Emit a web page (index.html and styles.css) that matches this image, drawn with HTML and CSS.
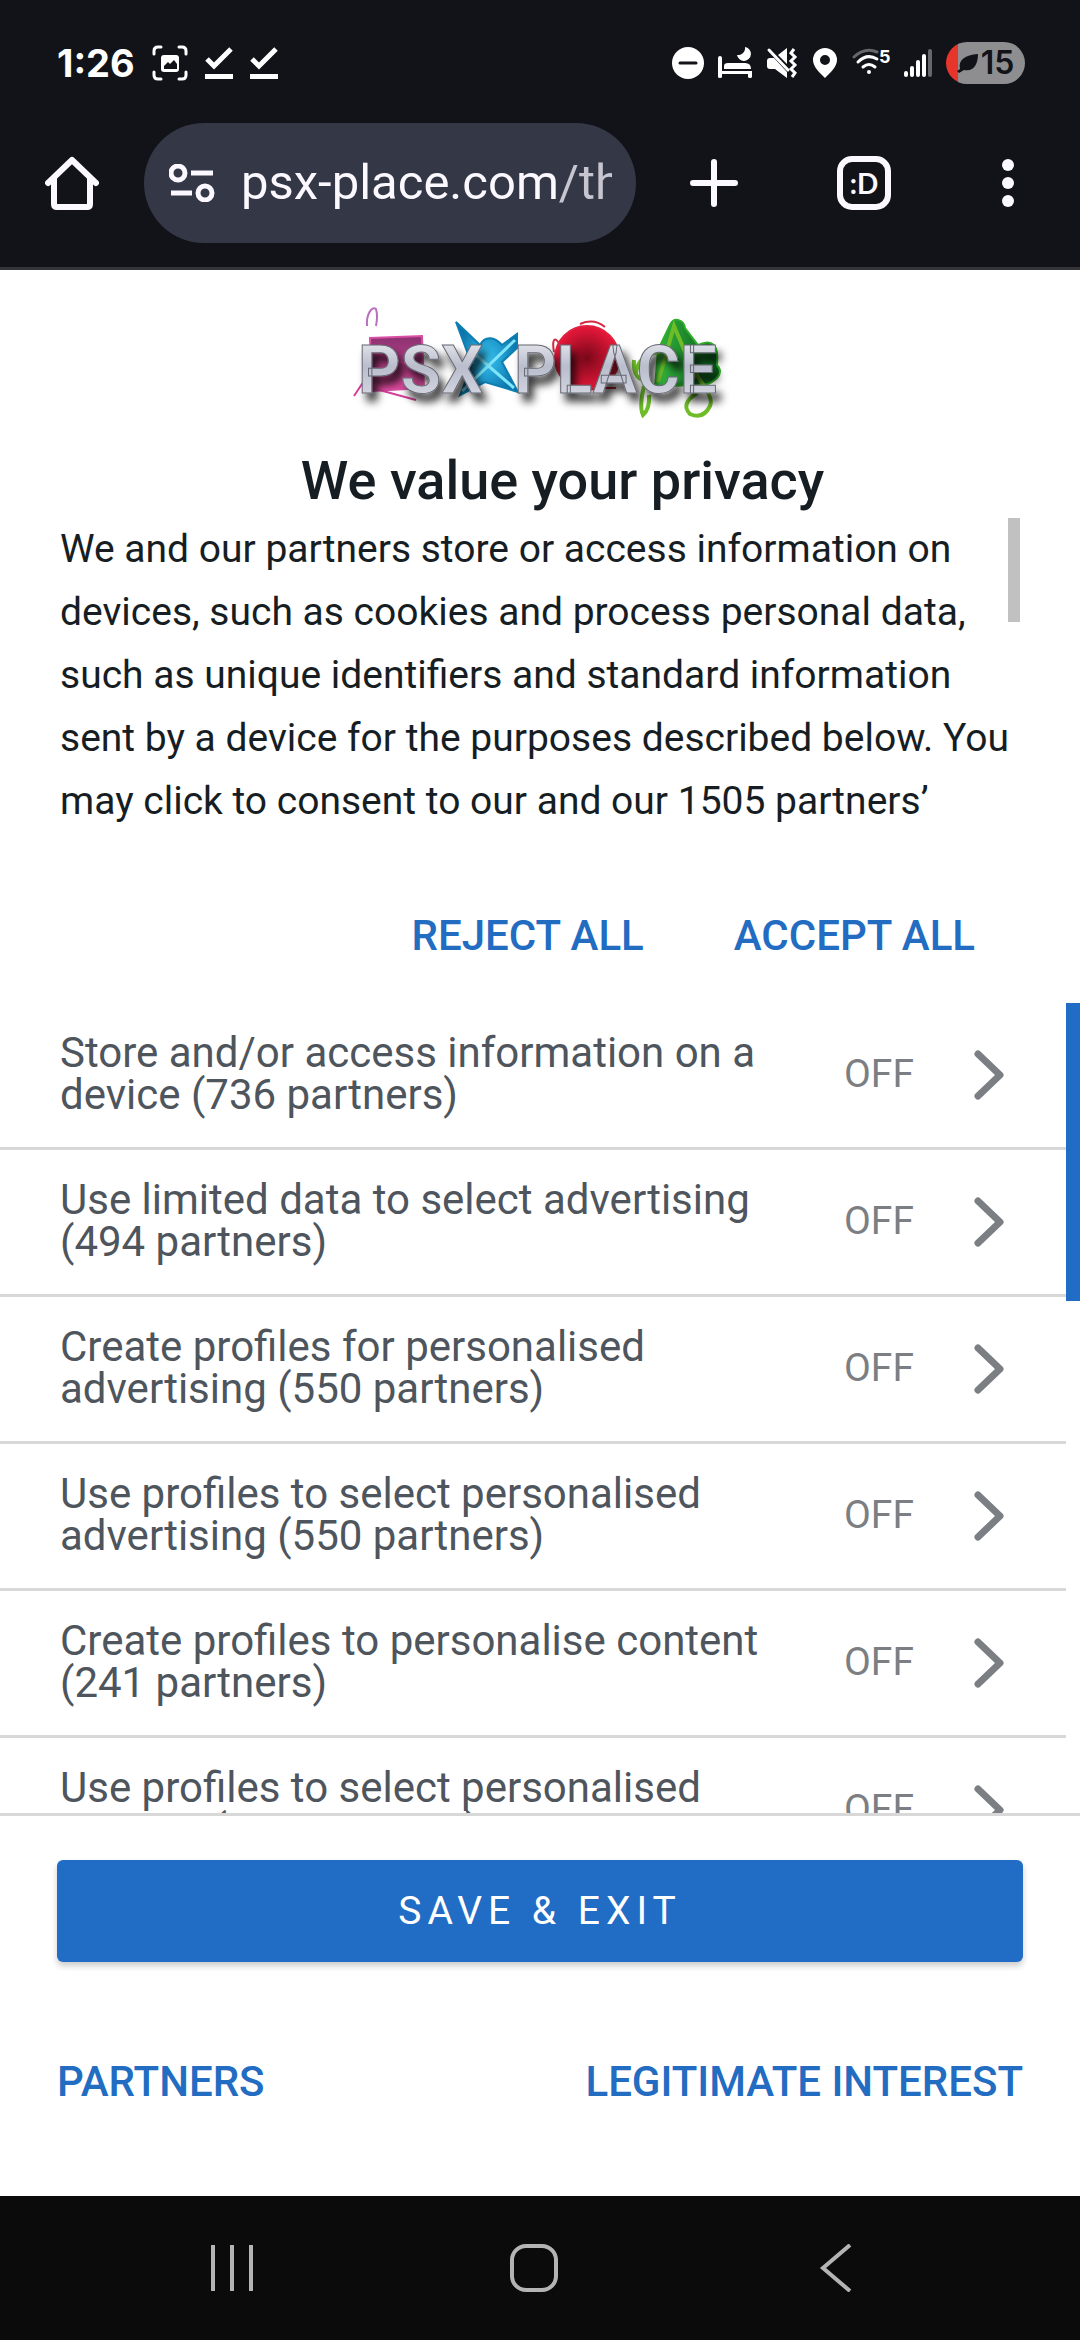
FILE: index.html
```html
<!DOCTYPE html>
<html lang="en">
<head>
<meta charset="utf-8">
<meta name="viewport" content="width=device-width, initial-scale=1">
<title>We value your privacy</title>
<link rel="stylesheet" href="styles.css">
</head>
<body>
<div class="screen">
  <header class="status">
    <div class="status-left">
      <time class="clock">1:26</time>
      <svg width="36" height="36" viewBox="0 0 36 36" fill="none" stroke="#fff" stroke-width="3" stroke-linecap="round"><path d="M2 9V6Q2 2 6 2H9M27 2H30Q34 2 34 6V9M34 27V30Q34 34 30 34H27M9 34H6Q2 34 2 30V27"/><rect x="9" y="10" width="18" height="17" rx="3" fill="#fff" stroke="none"/><path d="M12 24V21L16 17L18 19L22 15L25 19V24Z" fill="#121318" stroke="none"/></svg>
      <svg class="check" width="28" height="34" viewBox="0 0 28 34"><path d="M2 13L9 20L26 3" fill="none" stroke="#fff" stroke-width="5"/><path d="M0 28H28V33H0Z" fill="#fff"/></svg>
      <svg class="check" width="28" height="34" viewBox="0 0 28 34"><path d="M2 13L9 20L26 3" fill="none" stroke="#fff" stroke-width="5"/><path d="M0 28H28V33H0Z" fill="#fff"/></svg>
    </div>
    <div class="status-right">
      <svg width="32" height="32" viewBox="0 0 32 32"><circle cx="16" cy="16" r="16" fill="#fff"/><path d="M8 16H24" stroke="#121318" stroke-width="3" stroke-linecap="round"/></svg>
      <svg width="34" height="32" viewBox="0 0 34 32" fill="#fff"><path d="M0 11Q0 9 2 9T4 11V24H34V30Q34 31 32 31T30 30V27H4V30Q4 31 2 31T0 30Z"/><path d="M6 22V19Q6 16 10 16H27Q33 16 33 22Z"/><path d="M27 0A7 7 0 1 1 19 8A7 7 0 0 0 27 0Z"/></svg>
      <svg width="32" height="32" viewBox="0 0 32 32" fill="#fff"><path d="M1 14Q1 11 4 11H8L21 25V31L9 22H4Q1 22 1 19Z"/><path d="M12 8L21 1V17Z"/><path d="M3 3L22 23" stroke="#fff" stroke-width="3" stroke-linecap="round"/><path d="M28 2L25 6L29 10L25 14L29 18L25 22L29 26L26 30" fill="none" stroke="#fff" stroke-width="3"/></svg>
      <svg width="26" height="32" viewBox="0 0 26 32"><path fill="#fff" fill-rule="evenodd" d="M13 1A12 12 0 0 0 1 13C1 20 8 26 13 31C18 26 25 20 25 13A12 12 0 0 0 13 1ZM13 8A5 5 0 1 1 13 18A5 5 0 0 1 13 8Z"/></svg>
      <svg width="38" height="32" viewBox="0 0 38 32" fill="none" stroke="#fff" stroke-width="3" stroke-linecap="round"><path d="M2 10Q13 0 25 5" stroke="#66676b"/><path d="M6 15Q15 6 25 12M11 20Q17 15 23 20"/><circle cx="17" cy="25" r="2" fill="#fff" stroke="none"/><text x="27" y="16" class="wifi-num">5</text></svg>
      <svg width="28" height="32" viewBox="0 0 28 32" stroke="#fff" stroke-width="4" stroke-linecap="round"><path d="M2 26V28M8 21V28M14 15V28M20 9V28"/><path d="M26 4V28" stroke="#66676b"/></svg>
      <span class="battery"><svg width="22" height="22" viewBox="0 0 22 22"><path fill="#121318" d="M3 17C1 8 8 3 21 2C21 12 17 20 7 18L2 21L0 19L12 11Z"/></svg>15</span>
    </div>
  </header>
  <nav class="toolbar" aria-label="Browser">
    <button class="tool" aria-label="Home"><svg width="54" height="54" viewBox="0 0 54 54" fill="none" stroke="#fcf8ff" stroke-width="6" stroke-linejoin="round" stroke-linecap="round"><path d="M3 27L27 4L51 27M9 22V48Q9 51 12 51H42Q45 51 45 48V22"/></svg></button>
    <div class="omnibox">
      <svg width="46" height="38" viewBox="0 0 46 38" fill="none" stroke="#fcf8ff" stroke-width="5"><circle cx="9" cy="9" r="7"/><path d="M22 9H44M2 29H23"/><circle cx="36" cy="29" r="7"/></svg>
      <span class="url">psx-place.com<span class="path">/th</span></span>
    </div>
    <button class="tool" aria-label="New tab"><svg width="48" height="48" viewBox="0 0 48 48" stroke="#fcf8ff" stroke-width="6" stroke-linecap="round"><path d="M24 3V45M3 24H45"/></svg></button>
    <button class="tool" aria-label="Tabs"><span class="tabs">:D</span></button>
    <button class="tool" aria-label="Menu"><svg width="12" height="48" viewBox="0 0 12 48" fill="#fcf8ff"><circle cx="6" cy="6" r="6"/><circle cx="6" cy="24" r="6"/><circle cx="6" cy="42" r="6"/></svg></button>
  </nav>
  <main class="dialog">
    <svg class="logo" width="400" height="150" viewBox="0 0 400 150" role="img" aria-label="PSX-Place">
      <defs>
        <linearGradient id="metal" x1="0" y1="0" x2="0" y2="1"><stop offset="0" stop-color="#f4f4f8"/><stop offset=".45" stop-color="#b9bdcc"/><stop offset="1" stop-color="#dfe1ea"/></linearGradient>
        <radialGradient id="red"><stop offset="0" stop-color="#7a0719"/><stop offset="1" stop-color="#e8183a"/></radialGradient>
        <linearGradient id="pink" x1="0" y1="0" x2="0" y2="1"><stop offset="0" stop-color="#8b3270"/><stop offset="1" stop-color="#e04a9e"/></linearGradient>
        <radialGradient id="blue"><stop offset="0" stop-color="#36c5f4"/><stop offset="1" stop-color="#0d76ac"/></radialGradient>
        <linearGradient id="green" x1="0" y1="0" x2="1" y2="0"><stop offset="0" stop-color="#35b83f"/><stop offset="1" stop-color="#06541a"/></linearGradient>
        <filter id="shade" x="-10%" y="-20%" width="120%" height="150%"><feDropShadow dx="5" dy="8" stdDeviation="4" flood-color="#000" flood-opacity=".8"/></filter>
      </defs>
      <g fill="none" stroke-width="2">
        <path d="M27 36C26 24 32 16 36 19Q38 26 36 36" stroke="#b76fc0"/>
        <path d="M30 48L82 46L84 98L32 101Z" fill="url(#pink)" stroke="#d94fa4"/><path d="M14 106L22 94L32 98L76 110M32 62L84 80" stroke="#d6409b"/>
        <path d="M116 32L140 55C145 45 155 47 162 55L177 44L177 58L162 72L178 102L145 92L120 105L132 75Z" fill="url(#blue)" stroke="#0d7eb2"/><path d="M130 60L174 98M122 101L175 50" stroke="#7ee5fa" stroke-width="3"/>
        <circle cx="247" cy="68" r="32" fill="url(#red)" stroke="#df2240"/><path d="M214 62C210 40 222 44 232 98L276 98M240 34Q254 28 265 37" stroke="#d22b43"/>
        <path d="M315 97L318 60L330 35C334 26 344 30 345 38L358 55Q380 45 377 75Q386 85 368 94Z" fill="url(#green)" stroke="#2fae28"/>
        <path d="M304 96Q299 117 303 125Q310 119 309 105M353 76C357 90 375 106 370 116Q363 130 350 124Q340 114 357 103M318 92L334 36L356 88M296 83Q298 65 319 62M294 70Q292 92 312 92" stroke="#6ebd28" stroke-width="4"/>
      </g>
      <g class="wordmark" fill="url(#metal)" stroke="#686a74" filter="url(#shade)"><text x="18" y="103">PSX</text><text x="174" y="103">PLACE</text></g>
    </svg>
    <h1 class="title">We value your privacy</h1>
    <section class="notice">
      <p class="notice-text">We and our partners store or access information on devices, such as cookies and process personal data, such as unique identifiers and standard information sent by a device for the purposes described below. You may click to consent to our and our 1505 partners’</p>
      <span class="notice-thumb"></span>
    </section>
    <div class="choices"><button class="link">REJECT ALL</button><button class="link">ACCEPT ALL</button></div>
    <section class="purposes">
      <ul class="list">
        <li><button class="row"><span class="name">Store and/or access information on a device (736 partners)</span><span class="state">OFF</span><svg class="chev" viewBox="0 0 30 50"><path d="M4 4L26 25L4 46"/></svg></button></li>
        <li><button class="row"><span class="name">Use limited data to select advertising (494 partners)</span><span class="state">OFF</span><svg class="chev" viewBox="0 0 30 50"><path d="M4 4L26 25L4 46"/></svg></button></li>
        <li><button class="row"><span class="name">Create profiles for personalised advertising (550 partners)</span><span class="state">OFF</span><svg class="chev" viewBox="0 0 30 50"><path d="M4 4L26 25L4 46"/></svg></button></li>
        <li><button class="row"><span class="name">Use profiles to select personalised advertising (550 partners)</span><span class="state">OFF</span><svg class="chev" viewBox="0 0 30 50"><path d="M4 4L26 25L4 46"/></svg></button></li>
        <li><button class="row"><span class="name">Create profiles to personalise content (241 partners)</span><span class="state">OFF</span><svg class="chev" viewBox="0 0 30 50"><path d="M4 4L26 25L4 46"/></svg></button></li>
        <li><button class="row"><span class="name">Use profiles to select personalised content (219 partners)</span><span class="state">OFF</span><svg class="chev" viewBox="0 0 30 50"><path d="M4 4L26 25L4 46"/></svg></button></li>
      </ul>
      <span class="list-thumb"></span>
    </section>
    <footer class="actions">
      <button class="save">SAVE &amp; EXIT</button>
      <div class="more"><button class="link">PARTNERS</button><button class="link">LEGITIMATE INTEREST</button></div>
    </footer>
  </main>
  <nav class="system" aria-label="System">
    <button class="tool" aria-label="Recent apps"><svg width="48" height="48" viewBox="0 0 48 48" stroke="#b4b4b4" stroke-width="4"><path d="M5 1V47M24 1V47M43 1V47"/></svg></button>
    <button class="tool" aria-label="Home screen"><svg width="48" height="48" viewBox="0 0 48 48" fill="none" stroke="#b4b4b4" stroke-width="4"><rect x="2" y="2" width="44" height="44" rx="14"/></svg></button>
    <button class="tool" aria-label="Back"><svg width="48" height="48" viewBox="0 0 48 48" fill="none" stroke="#b4b4b4" stroke-width="4"><path d="M38 1L11 24L38 47"/></svg></button>
  </nav>
</div>
</body>
</html>
```
FILE: styles.css
```css
* { box-sizing: border-box; }
body { margin: 0; font-family: Roboto, "Liberation Sans", sans-serif; background: #fff; color: #171e23; }
button { margin: 0; padding: 0; border: 0; background: none; color: inherit; font: inherit; cursor: pointer; }
svg { display: block; flex: none; }
.screen { display: flex; flex-direction: column; height: 100vh; }

.status { display: flex; justify-content: space-between; align-items: center; height: 104px; padding: 22px 55px 0 57px; background: #121318; color: #fff; }
.status-left, .status-right { display: flex; align-items: center; }
.status-left { gap: 17px; }
.status-right { gap: 14px; }
.clock { font: 700 38px/42px Inter, sans-serif; }
.wifi-num { font: 700 18px Inter, sans-serif; fill: #fff; stroke: none; }
.battery { display: flex; align-items: center; justify-content: center; gap: 2px; width: 79px; height: 42px; border-radius: 21px; background: linear-gradient(90deg, #e8352c 12px, #8e8e91 12px); color: #121318; font: 600 32px/42px Inter, sans-serif; }

.toolbar { display: grid; grid-template-columns: 144px minmax(0, 1fr) 156px 144px 144px; align-items: center; height: 166px; padding-bottom: 5px; border-bottom: 3px solid #333338; background: #121318; color: #fcf8ff; }
.tool { display: grid; place-items: center; height: 100%; }
.omnibox { display: flex; align-items: center; gap: 26px; height: 120px; padding: 0 24px 0 25px; border-radius: 60px; background: #343746; }
.url { flex: 1; min-width: 0; overflow: hidden; white-space: nowrap; font: 400 49px/72px Roboto, sans-serif; }
.path { color: #c6c5d0; }
.tabs { display: grid; place-items: center; width: 54px; height: 54px; border: 6px solid #fcf8ff; border-radius: 15px; font: 700 28px/30px Lato, sans-serif; }

.dialog { display: flex; flex-direction: column; flex: 1; min-height: 0; }
.logo { align-self: center; margin-top: 20px; overflow: visible; }
.title { margin: 0 0 0 45px; padding: 6px 0 2px; text-align: center; font-size: 54px; line-height: 70px; font-weight: 500; }
.notice { position: relative; height: 315px; padding: 0 60px; overflow: hidden; }
.notice-text { margin: 0; font-size: 39px; line-height: 63px; }
.notice-thumb { position: absolute; top: 0; right: 60px; width: 12px; height: 104px; background: #c1c1c1; }
.choices { display: flex; justify-content: flex-end; gap: 90px; padding: 78px 105px 42px; }
.link { color: #226cc2; font-size: 42px; line-height: 50px; font-weight: 500; }
.purposes { display: flex; flex: 1; min-height: 0; overflow: hidden; }
.list { flex: 1; min-width: 0; margin: 0; padding: 0; list-style: none; }
.row { display: flex; align-items: center; width: 100%; height: 147px; padding: 0 62px 0 60px; border-bottom: 3px solid #d8d8d8; text-align: left; }
.name { flex: 1; padding: 0 60px 2px 0; color: #4e555d; font-size: 42px; line-height: 42px; }
.state { width: 130px; padding-bottom: 2px; color: #7b7f84; font-size: 39px; line-height: 42px; }
.chev { width: 30px; height: 50px; fill: none; stroke: #7b7f84; stroke-width: 7; stroke-linecap: round; stroke-linejoin: round; }
.list-thumb { width: 14px; height: 298px; background: #216cc4; }
.actions { padding: 44px 57px 89px; border-top: 3px solid #d8d8d8; }
.save { display: block; width: 100%; height: 102px; border-radius: 6px; background: #216cc4; color: #fff; font-size: 39px; letter-spacing: 6px; box-shadow: 0 4px 6px rgba(0, 0, 0, .2); }
.more { display: flex; justify-content: space-between; padding-top: 95px; }
.wordmark { font: 700 66px Roboto, sans-serif; }

.system { display: grid; grid-template-columns: repeat(3, 302px); justify-content: center; height: 144px; padding-right: 12px; background: #0b0b0b; }
```
